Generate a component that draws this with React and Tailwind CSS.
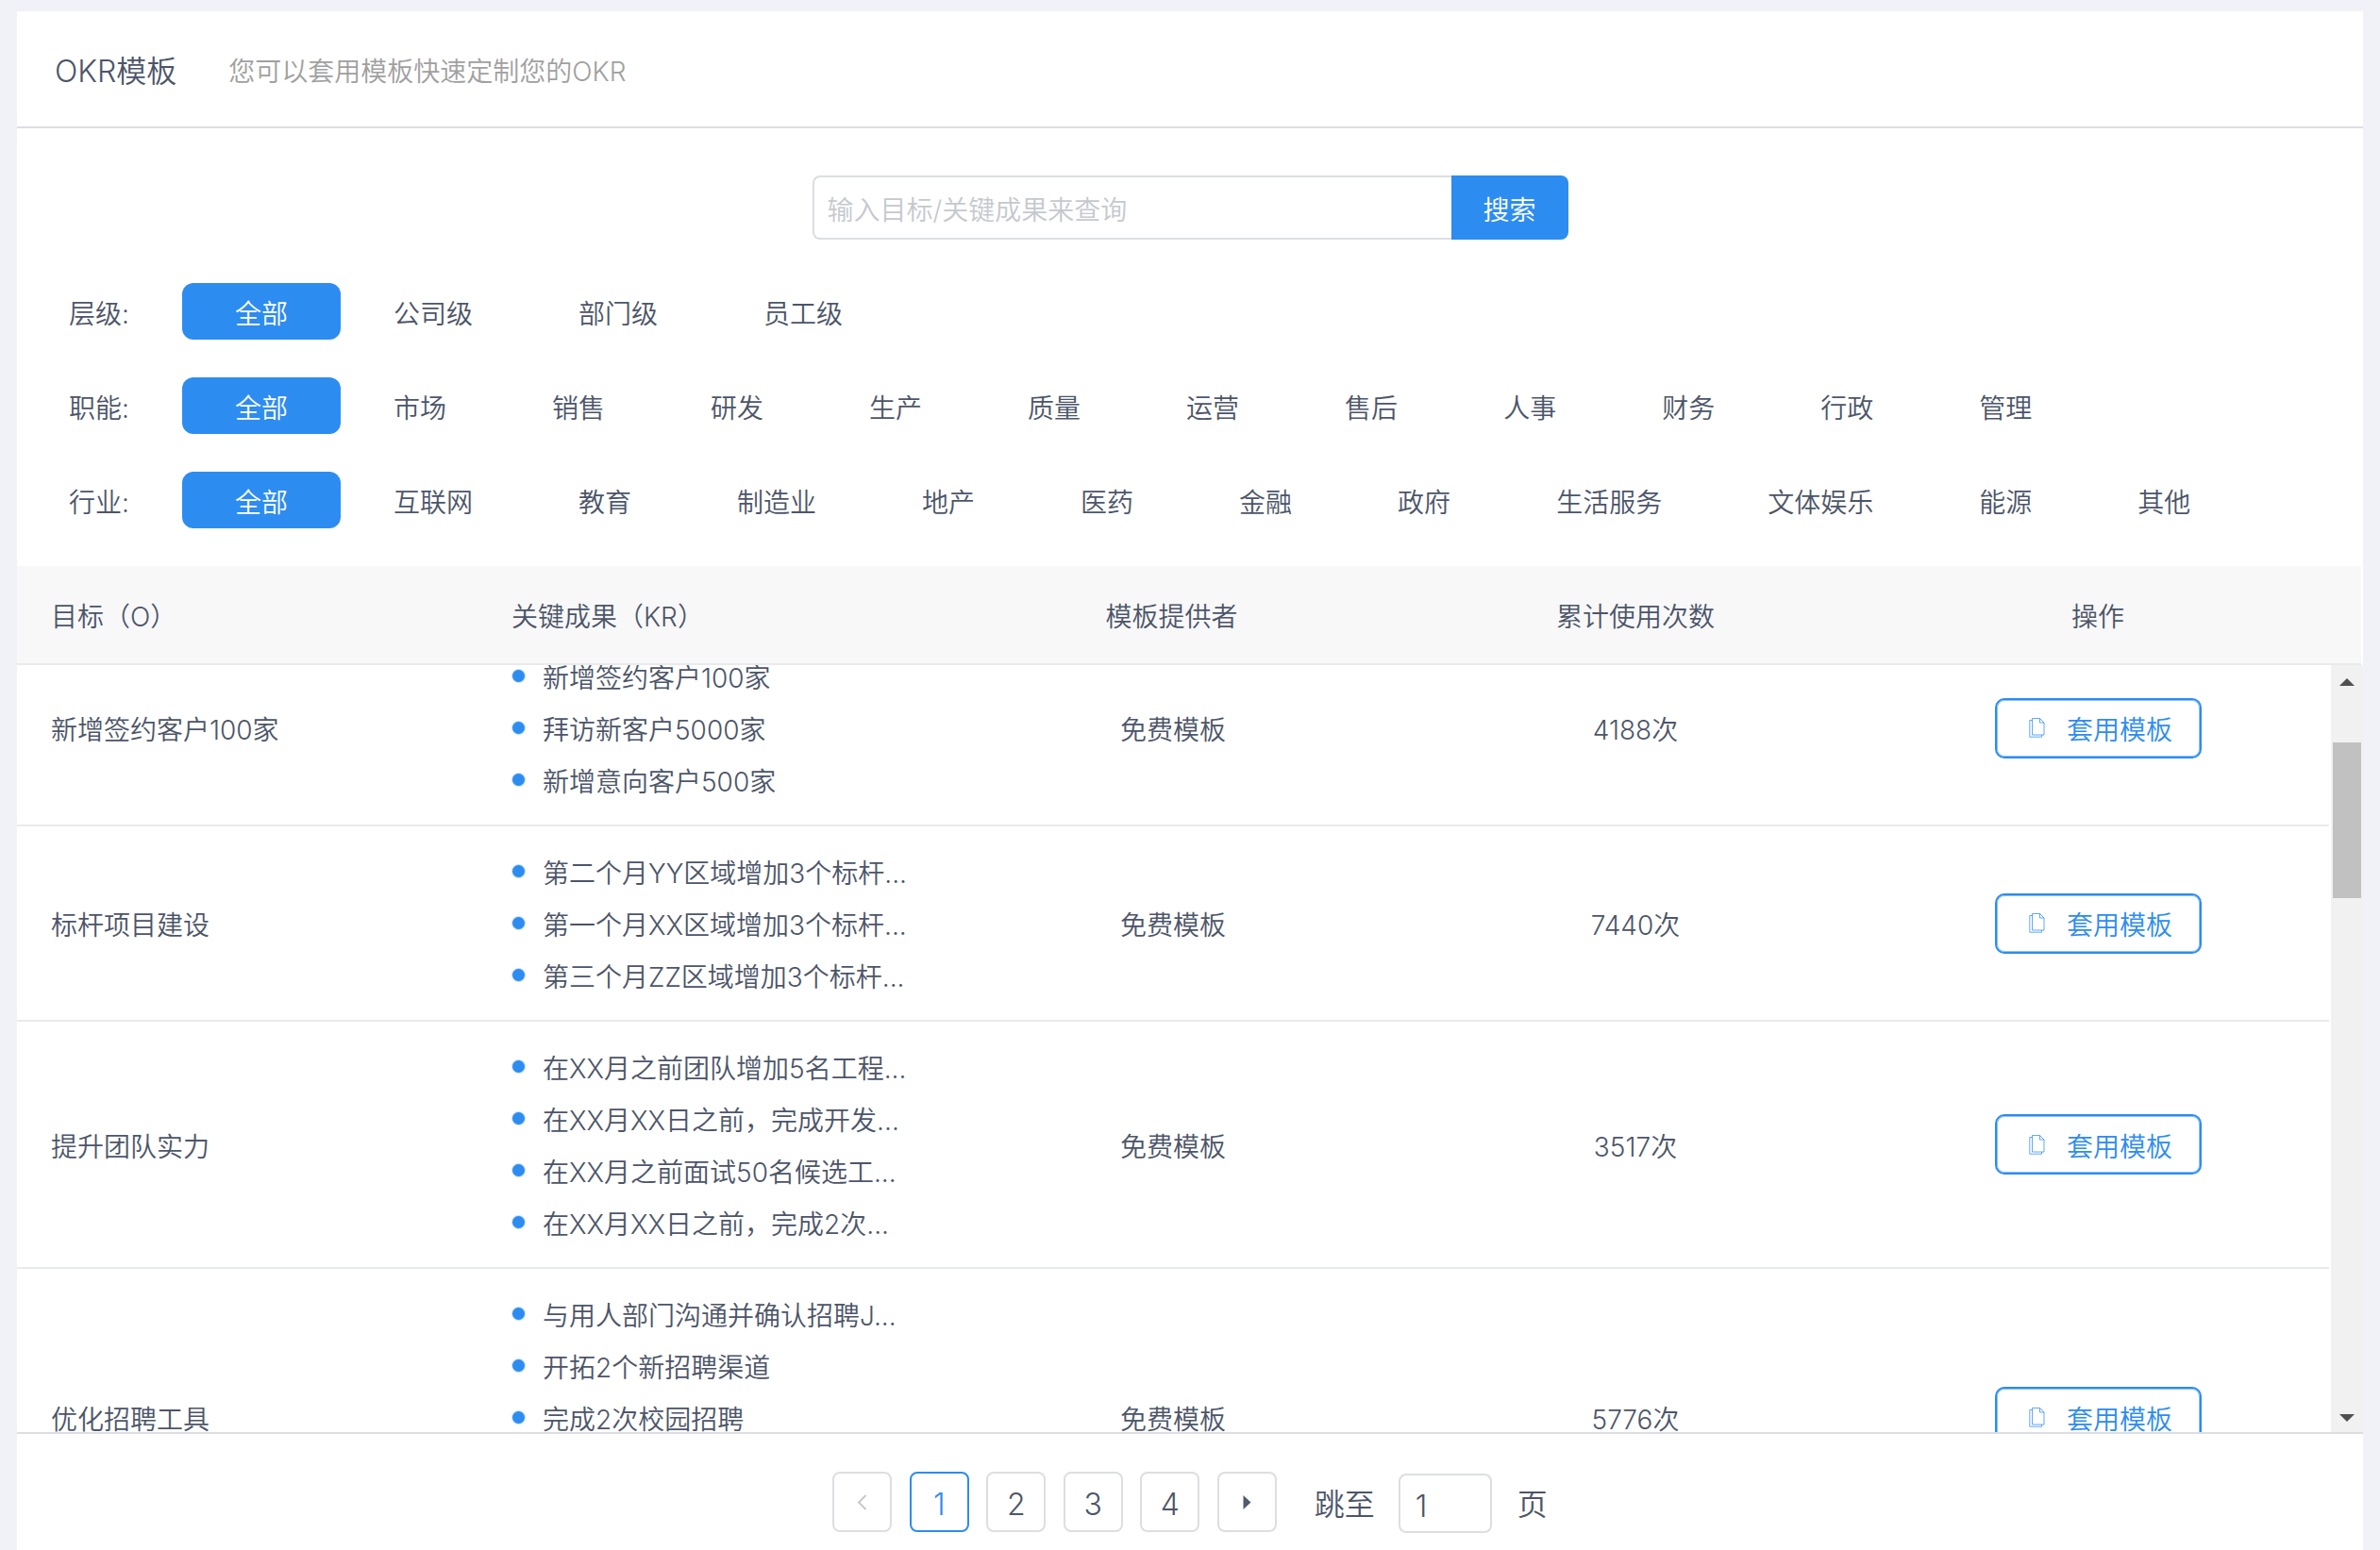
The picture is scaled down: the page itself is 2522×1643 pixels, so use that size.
const levels = ["全部", "公司级", "部门级", "员工级"];
const funcs = ["全部", "市场", "销售", "研发", "生产", "质量", "运营", "售后", "人事", "财务", "行政", "管理"];
const inds = ["全部", "互联网", "教育", "制造业", "地产", "医药", "金融", "政府", "生活服务", "文体娱乐", "能源", "其他"];

const rows = [
  { o: "新增签约客户100家", krs: ["新增签约客户100家", "拜访新客户5000家", "新增意向客户500家"], n: "4188次", h: "h-[207px]" },
  { o: "标杆项目建设", krs: ["第二个月YY区域增加3个标杆...", "第一个月XX区域增加3个标杆...", "第三个月ZZ区域增加3个标杆..."], n: "7440次", h: "h-[207px]" },
  { o: "提升团队实力", krs: ["在XX月之前团队增加5名工程...", "在XX月XX日之前，完成开发...", "在XX月之前面试50名候选工...", "在XX月XX日之前，完成2次..."], n: "3517次", h: "h-[262px]" },
  { o: "优化招聘工具", krs: ["与用人部门沟通并确认招聘J...", "开拓2个新招聘渠道", "完成2次校园招聘", "完善招聘流程", "建立人才库"], n: "5776次", h: "h-[316px]" },
];

function FilterRow({ label, items }) {
  return (
    <div className="flex items-center h-[60px] text-[28px]">
      <div className="w-[175px] pl-[55px] pt-[5px]">{label}:</div>
      {items.map((t, i) => (
        <div key={t} className={"h-[60px] px-[56px] pt-[5px] flex items-center rounded-[12px] " + (i === 0 ? "bg-[#2d8cf0] text-white" : "")}>
          {t}
        </div>
      ))}
    </div>
  );
}

function DocIcon() {
  return (
    <svg width="17" height="21" viewBox="0 0 17 21" fill="none" stroke="#2d8cf0" strokeWidth="1" strokeOpacity="0.75" className="shrink-0">
      <path d="M3.5 0.5H11.5L16 5V18H3.5Z" />
      <path d="M11.5 0.5V5H16" />
      <path d="M3.5 2.5H0.8V20.2H13.5V18" />
    </svg>
  );
}

function Row({ r }) {
  return (
    <div className={"grid grid-cols-5 items-center border-b-2 border-[#e8eaec] shrink-0 " + r.h}>
      <div className="pl-[36px] pt-[5px]">{r.o}</div>
      <ul className="pl-[35px]">
        {r.krs.map((k) => (
          <li key={k} className="h-[55px] flex items-center whitespace-nowrap">
            <span className="w-[13px] h-[13px] rounded-full bg-[#2d8cf0] ring-1 ring-[#c5e0fb] mr-[19px] shrink-0" />
            <span className="pt-[5px]">{k}</span>
          </li>
        ))}
      </ul>
      <div className="text-center pt-[5px]">免费模板</div>
      <div className="text-center pt-[5px]">{r.n}</div>
      <div className="flex justify-center">
        <div className="w-[219px] h-[64px] pl-[6px] border-2 shadow-[inset_0_0_0_1px_#8cc0f6] border-[#2d8cf0] rounded-[10px] flex items-center justify-center gap-[23px] text-[#2d8cf0]">
          <DocIcon />
          <span className="pt-[5px]">套用模板</span>
        </div>
      </div>
    </div>
  );
}

function Pg({ children, active }) {
  return (
    <div className={"w-[63px] h-[64px] rounded-[8px] border-2 flex items-center justify-center text-[32px] " + (active ? "border-[#2d8cf0] text-[#2d8cf0]" : "border-[#dcdee2]")}>
      {children}
    </div>
  );
}

export default function App() {
  return (
    <div className="h-[1643px] bg-[#f0f2f7] pt-[12px] pl-[18px] pr-[18px] overflow-hidden text-[#4c5569] font-[350] [font-family:'Inter','Noto_Sans_CJK_SC',sans-serif]">
      <div className="h-[1631px] bg-white flex flex-col">
        <div className="h-[124px] shrink-0 pt-[5px] border-b-2 border-[#dcdee2] flex items-center pl-[40px]">
          <span className="text-[32px]">OKR模板</span>
          <span className="text-[28px] text-[#a0a0a0] ml-[55px]">您可以套用模板快速定制您的OKR</span>
        </div>

        <div className="flex justify-center mt-[50px] shrink-0">
          <div className="flex h-[68px]">
            <input
              readOnly
              placeholder="输入目标/关键成果来查询"
              className="w-[677px] border-2 border-r-0 border-[#dcdee2] rounded-l-[8px] pl-[14px] pt-[5px] text-[28px] outline-none placeholder:text-[#c5c8ce]"
            />
            <div className="w-[124px] pt-[5px] bg-[#2d8cf0] text-white text-[28px] rounded-r-[8px] flex items-center justify-center">搜索</div>
          </div>
        </div>

        <div className="flex flex-col gap-[40px] mt-[46px] shrink-0">
          <FilterRow label="层级" items={levels} />
          <FilterRow label="职能" items={funcs} />
          <FilterRow label="行业" items={inds} />
        </div>

        <div className="mt-[40px] mr-[2px] h-[105px] shrink-0 bg-[#f8f8f9] border-b-2 border-[#e8eaec] flex text-[28px]">
          <div className="w-[2450px] grid grid-cols-5 items-center pt-[5px]">
            <div className="pl-[36px]">目标（O）</div>
            <div className="pl-[34px]">关键成果（KR）</div>
            <div className="text-center pr-[3px]">模板提供者</div>
            <div className="text-center">累计使用次数</div>
            <div className="text-center">操作</div>
          </div>
        </div>

        <div className="h-[813px] shrink-0 flex overflow-hidden text-[28px]">
          <div className="w-[2450px] h-[813px] overflow-hidden shrink-0">
            <div className="-mt-[36px] flex flex-col">
              {rows.map((r) => (
                <Row key={r.o} r={r} />
              ))}
            </div>
          </div>
          <div className="w-[34px] ml-[2px] h-[813px] bg-[#f1f1f1] flex flex-col items-center shrink-0">
            <svg width="16" height="8" viewBox="0 0 16 8" className="mt-[14px] shrink-0">
              <path d="M8 0L16 8H0Z" fill="#505050" />
            </svg>
            <div className="w-[30px] h-[165px] bg-[#c1c1c1] mt-[60px] shrink-0" />
            <svg width="16" height="8" viewBox="0 0 16 8" className="mt-auto mb-[11px] shrink-0">
              <path d="M0 0H16L8 8Z" fill="#505050" />
            </svg>
          </div>
        </div>

        <div className="border-t-2 border-[#dcdee2] flex-1 flex justify-center items-start pt-[40px]">
          <div className="flex gap-[18.5px]">
            <Pg>
              <svg width="11" height="17" viewBox="0 0 11 17" fill="none" stroke="#c5c8ce" strokeWidth="2">
                <path d="M9.5 1L2 8.5L9.5 16" />
              </svg>
            </Pg>
            <Pg active><span className="pt-[5px]">1</span></Pg>
            <Pg><span className="pt-[5px]">2</span></Pg>
            <Pg><span className="pt-[5px]">3</span></Pg>
            <Pg><span className="pt-[5px]">4</span></Pg>
            <Pg>
              <svg width="9" height="15" viewBox="0 0 9 15">
                <path d="M0.5 0L8.5 7.5L0.5 15Z" fill="#515a6e" />
              </svg>
            </Pg>
          </div>
          <div className="ml-[40px] h-[64px] pt-[6px] flex items-center text-[32px]">跳至</div>
          <input
            readOnly
            value="1"
            className="ml-[25px] mt-[2px] w-[99px] h-[63px] border-2 border-[#dcdee2] rounded-[8px] pl-[16px] pt-[5px] text-[32px] outline-none"
          />
          <div className="ml-[27px] h-[64px] pt-[6px] flex items-center text-[32px]">页</div>
        </div>
      </div>
    </div>
  );
}
